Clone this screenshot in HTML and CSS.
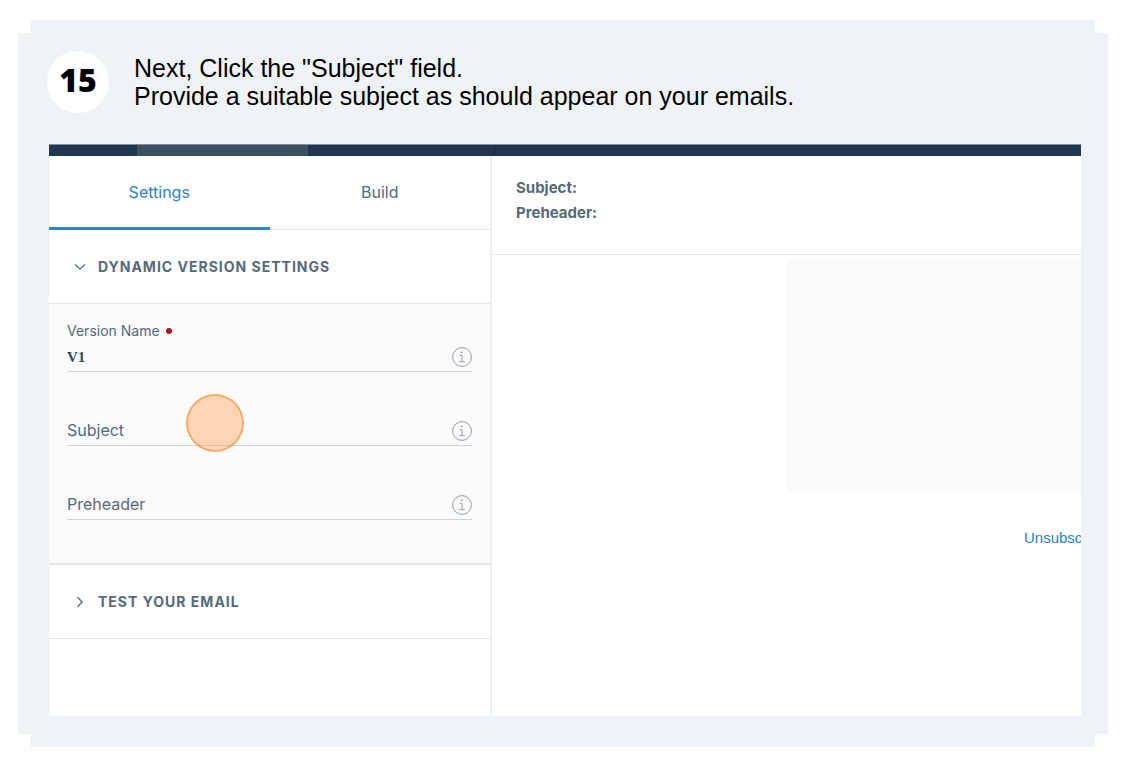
FILE: index.html
```html
<!DOCTYPE html>
<html lang="en">
<head>
<meta charset="utf-8">
<meta name="viewport" content="width=device-width, initial-scale=1">
<title>Step 15</title>
<link rel="stylesheet" href="styles.css">
</head>
<body>
<main class="step">
  <header class="step-header">
    <span class="step-number">15</span>
    <h1 class="step-title">Next, Click the "Subject" field.<br>Provide a suitable subject as should appear on your emails.</h1>
  </header>
  <div class="app">
    <div class="topbar"><span class="topbar-active"></span><span class="topbar-mark"></span></div>
    <div class="workspace">
      <aside class="sidebar">
        <nav class="tabs">
          <button class="tab tab-active" type="button">Settings</button>
          <button class="tab" type="button">Build</button>
        </nav>
        <button class="section" type="button" aria-expanded="true">
          <svg class="chevron" viewBox="0 0 12 12" aria-hidden="true"><path d="M1.200 3.500 6 8.200l4.800-4.700"/></svg>
          DYNAMIC VERSION SETTINGS
        </button>
        <form class="fields">
          <div class="field">
            <label class="caption" for="version">Version Name <span class="required"></span></label>
            <div class="row">
              <input class="input" id="version" type="text" value="V1">
              <button class="info" type="button" aria-label="About version name"><svg viewBox="0 0 20 20" aria-hidden="true"><circle cx="10" cy="10" r="9.400"/><path d="M7.800 8.500h2.300v6M7.200 14.700h5.700"/><circle class="dot" cx="9.700" cy="5.300" r=".9"/></svg></button>
            </div>
          </div>
          <div class="field">
            <div class="row">
              <label class="label" for="subject">Subject</label>
              <input class="input" id="subject" type="text">
              <button class="info" type="button" aria-label="About subject"><svg viewBox="0 0 20 20" aria-hidden="true"><circle cx="10" cy="10" r="9.400"/><path d="M7.800 8.500h2.300v6M7.200 14.700h5.700"/><circle class="dot" cx="9.700" cy="5.300" r=".9"/></svg></button>
            </div>
            <span class="click-spot"></span>
          </div>
          <div class="field">
            <div class="row">
              <label class="label" for="preheader">Preheader</label>
              <input class="input" id="preheader" type="text">
              <button class="info" type="button" aria-label="About preheader"><svg viewBox="0 0 20 20" aria-hidden="true"><circle cx="10" cy="10" r="9.400"/><path d="M7.800 8.500h2.300v6M7.200 14.700h5.700"/><circle class="dot" cx="9.700" cy="5.300" r=".9"/></svg></button>
            </div>
          </div>
        </form>
        <button class="section" type="button" aria-expanded="false">
          <svg class="chevron" viewBox="0 0 12 12" aria-hidden="true"><path d="M3.500 1.200 8.200 6l-4.700 4.800"/></svg>
          TEST YOUR EMAIL
        </button>
      </aside>
      <section class="preview">
        <div class="summary"><strong>Subject:</strong><strong>Preheader:</strong></div>
        <div class="canvas">
          <div class="email-body"></div>
          <a class="unsubscribe" href="#">Unsubscribe</a>
        </div>
      </section>
    </div>
  </div>
</main>
</body>
</html>
```
FILE: styles.css
```css
* { box-sizing: border-box; }

body {
  margin: 0;
  padding: 20px 40px 20px 18px;
  background: #fff;
  font-family: Inter, Roboto, "Liberation Sans", sans-serif;
  color: #56697b;
}

button {
  padding: 0;
  border: 0;
  background: none;
  font: inherit;
  color: inherit;
}

.step {
  padding: 31px 27px 31px 31px;
  background: #eff3f8;
  clip-path: polygon(13px 0, calc(100% - 13px) 0, calc(100% - 13px) 13px, 100% 13px, 100% calc(100% - 13px), calc(100% - 13px) calc(100% - 13px), calc(100% - 13px) 100%, 13px 100%, 13px calc(100% - 13px), 0 calc(100% - 13px), 0 13px, 13px 13px);
}

.step-header {
  display: flex;
  align-items: flex-start;
  gap: 25px;
  min-height: 93px;
  margin-left: -2px;
  font-family: "Liberation Sans", Arial, sans-serif;
  color: #000;
}

.step-number {
  display: flex;
  align-items: center;
  justify-content: center;
  flex: none;
  width: 62px;
  height: 62px;
  padding-bottom: 4px;
  border-radius: 50%;
  background: #fff;
  font: 800 32px/32px "Open Sans", sans-serif;
}

.step-title {
  margin: 3px 0 0;
  font-size: 25px;
  font-weight: 400;
  line-height: 28px;
}

.app {
  overflow: hidden;
  background: #fff;
}

.topbar {
  display: flex;
  height: 12px;
  padding-left: 88px;
  border-top: 1px solid #7f8e9d;
  background: #20384f;
}

.topbar-active {
  width: 171px;
  background: #3b5162;
}

.topbar-mark {
  width: 187px;
  border-right: 1px solid #142a3e;
}

.workspace {
  display: flex;
  min-height: 560px;
}

.sidebar {
  flex: 0 0 443px;
  border-right: 2px solid #edf0f3;
}

.tabs {
  display: flex;
  height: 74px;
  border-bottom: 1px solid #e6eaed;
}

.tab {
  flex: 1;
  height: 74px;
  border-bottom: 3px solid transparent;
  font-size: 16px;
}

.tab-active {
  border-bottom-color: #2c84ca;
  color: #2f83c4;
}

.section {
  display: flex;
  align-items: center;
  gap: 12px;
  width: 100%;
  height: 74px;
  padding-left: 25px;
  border-bottom: 1px solid #e3e8ea;
  font-size: 14px;
  font-weight: 700;
  letter-spacing: 1px;
}

.chevron {
  width: 12px;
  height: 12px;
  fill: none;
  stroke: #56697b;
  stroke-width: 1.3;
}

.fields {
  padding: 18px 18px 43px 18px;
  border-bottom: 2px solid #e3e8ea;
  background: #fbfbfb;
}

.field {
  position: relative;
  display: flex;
  flex-direction: column;
  justify-content: flex-end;
  height: 74px;
}

.field:first-child { height: 50px; }

.caption {
  display: flex;
  align-items: center;
  gap: 6px;
  font-size: 14px;
  line-height: 18px;
}

.required {
  width: 6px;
  height: 6px;
  border-radius: 50%;
  background: #aa1427;
}

.row {
  display: flex;
  align-items: center;
  height: 32px;
  border-bottom: 1px solid #cfd5dc;
}

.label { font-size: 16px; }

.input {
  flex: 1;
  min-width: 0;
  padding: 4px 0 0;
  border: 0;
  outline: 0;
  background: none;
  font: 700 15px "Liberation Serif", serif;
  color: #304960;
}

.info {
  align-self: flex-end;
  width: 20px;
  height: 20px;
  margin-bottom: 4px;
}

.info svg {
  display: block;
  fill: none;
  stroke: #929aa6;
  stroke-width: 1;
}

.info .dot {
  fill: #929aa6;
  stroke: none;
}

.click-spot {
  position: absolute;
  left: 119px;
  bottom: -6px;
  width: 58px;
  height: 58px;
  border: 2px solid rgba(244, 145, 56, .6);
  border-radius: 50%;
  background: rgba(255, 157, 80, .4);
}

.preview {
  flex: 1;
  min-width: 0;
  overflow: hidden;
}

.summary {
  display: flex;
  flex-direction: column;
  height: 99px;
  padding: 19px 24px;
  border-bottom: 1px solid #e3e8eb;
  font-size: 15px;
  line-height: 25px;
}

.canvas {
  display: flex;
  flex-direction: column;
  padding: 4px 0 0 50%;
}

.email-body {
  height: 233px;
  background: #fafafa;
}

.unsubscribe {
  align-self: flex-end;
  width: 57px;
  margin-top: 37px;
  font: 15px/18px "Liberation Sans", Arial, sans-serif;
  color: #1d82cb;
  text-decoration: none;
  white-space: nowrap;
}
```
